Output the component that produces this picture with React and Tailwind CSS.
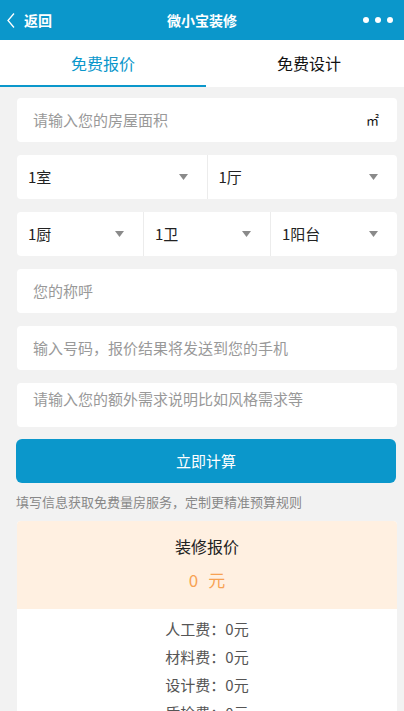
import React from 'react';

const font = { fontFamily: '"Noto Sans CJK SC", "Noto Sans", sans-serif' };

const Arrow = () => (
  <svg width="9" height="6" viewBox="0 0 9 6" className="shrink-0">
    <polygon points="0,0 9,0 4.5,6" fill="#8a8a8a" />
  </svg>
);

const SelectCell = ({ label, last }) => (
  <div
    className={`flex-1 flex items-center justify-between pl-[11px] pr-[19px] ${
      last ? '' : 'border-r border-[#ececec]'
    }`}
  >
    <span className="text-[15px] text-[#222]">{label}</span>
    <Arrow />
  </div>
);

const Input = ({ text, top }) => (
  <div
    className={`h-11 bg-white rounded flex px-4 ${
      top ? 'items-start pt-[5px]' : 'items-center'
    }`}
  >
    <span className="text-[15px] text-[#999]">{text}</span>
  </div>
);

export default function App() {
  return (
    <div className="w-[404px] h-[711px] overflow-hidden bg-[#f2f2f2]" style={font}>
      {/* Header */}
      <div className="h-10 bg-[#0b97cb] flex items-center justify-between text-white">
        <div className="flex items-center pl-[7px] w-[120px]">
          <svg width="8" height="15" viewBox="0 0 8 15">
            <polyline points="7,0.5 1,7.5 7,14.5" fill="none" stroke="white" strokeWidth="1.3" />
          </svg>
          <span className="ml-[9px] text-[14px] font-bold">返回</span>
        </div>
        <span className="text-[14px] font-bold">微小宝装修</span>
        <div className="flex items-center justify-end gap-[6px] pr-[11px] w-[120px]">
          <span className="w-[6px] h-[6px] rounded-full bg-white" />
          <span className="w-[6px] h-[6px] rounded-full bg-white" />
          <span className="w-[6px] h-[6px] rounded-full bg-white" />
        </div>
      </div>

      {/* Tabs */}
      <div className="h-[47px] bg-white flex">
        <div className="w-[206px] flex items-center justify-center border-b-2 border-[#0b97cb] text-[#0b97cb] text-[16px]">
          免费报价
        </div>
        <div className="flex-1 flex items-center justify-center pl-2 border-b-2 border-transparent text-[#111] text-[16px]">
          免费设计
        </div>
      </div>

      {/* Form */}
      <div className="pl-[17px] pr-[7px] pt-[11px] flex flex-col gap-[13px]">
        <div className="h-11 bg-white rounded flex items-center justify-between pl-4 pr-[18px]">
          <span className="text-[15px] text-[#999]">请输入您的房屋面积</span>
          <span className="text-[13px] text-[#111]">㎡</span>
        </div>

        <div className="h-11 bg-white rounded flex">
          <SelectCell label="1室" />
          <SelectCell label="1厅" last />
        </div>

        <div className="h-11 bg-white rounded flex">
          <SelectCell label="1厨" />
          <SelectCell label="1卫" />
          <SelectCell label="1阳台" last />
        </div>

        <Input text="您的称呼" />
        <Input text="输入号码，报价结果将发送到您的手机" />
        <Input text="请输入您的额外需求说明比如风格需求等" top />
      </div>

      <div className="pl-4 pr-2 pt-3">
        <button className="w-full h-11 rounded-md bg-[#0b97cb] text-white text-[15px]">
          立即计算
        </button>
        <p className="mt-[9px] text-[13px] text-[#888]">
          填写信息获取免费量房服务，定制更精准预算规则
        </p>
      </div>

      {/* Result */}
      <div className="ml-[17px] mr-[7px] mt-[9px] bg-white rounded-t">
        <div className="h-[88px] bg-[#fff0e1] rounded-t flex flex-col items-center pt-[13px]">
          <span className="text-[16px] font-normal text-[#222]">装修报价</span>
          <span className="mt-[9px] flex gap-[10px] text-[17px] text-[#f7a253]">
            <span>0</span>
            <span>元</span>
          </span>
        </div>
        <div className="flex flex-col items-center pt-[6px] text-[15px] text-[#555] leading-[28px]">
          <span>人工费：0元</span>
          <span>材料费：0元</span>
          <span>设计费：0元</span>
          <span>质检费：0元</span>
        </div>
      </div>
    </div>
  );
}
